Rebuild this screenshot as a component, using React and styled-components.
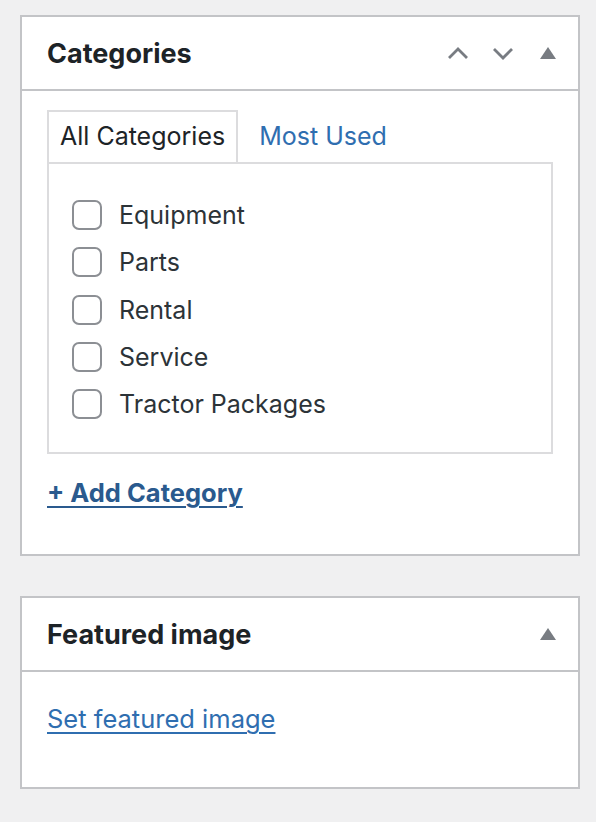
import styled, { createGlobalStyle } from "styled-components";

const GlobalStyle = createGlobalStyle`
  html, body {
    margin: 0;
    padding: 0;
    background: #f0f0f1;
  }
  body {
    font-family: Inter, "Noto Sans", "Liberation Sans", sans-serif;
    color: #2c3338;
  }
`

const Sidebar = styled.div`
  display: flex;
  flex-direction: column;
  gap: 40px;
  padding: 15px 16px 30px 20px;
  width: 560px;
`

const Box = styled.section`
  background: #fff;
  border: 2px solid #c3c4c7;
  box-sizing: border-box;
`

const BoxHeader = styled.header`
  display: flex;
  align-items: center;
  justify-content: space-between;
  height: 72px;
  padding: 0 18px 0 25px;
  border-bottom: 2px solid #c3c4c7;
`

const BoxTitle = styled.h2`
  margin: 0;
  font-size: 27px;
  font-weight: 700;
  color: #1d2327;
`

const Actions = styled.div`
  display: flex;
  align-items: center;
  gap: 21px;
`

const ActionIcon = styled.svg`
  width: 24px;
  height: 24px;
  display: block;
`

const BoxBody = styled.div`
  padding: ${p => p.$pad || "19px 25px 46px 25px"};
`

const Tabs = styled.ul`
  display: flex;
  list-style: none;
  margin: 0;
  padding: 0;
`

const Tab = styled.li`
  padding: 8px 11px 9px 11px;
  font-size: 25px;
  line-height: 33px;
  border: 2px solid ${p => (p.$active ? "#dcdcde" : "transparent")};
  border-bottom: none;
  color: ${p => (p.$active ? "#1d2327" : "#2f6eb0")};
  margin-left: ${p => (p.$active ? "0" : "8px")};
`

const TabPanel = styled.div`
  border: 2px solid #dcdcde;
  padding: 36px 23px 22px 23px;
  height: 292px;
  box-sizing: border-box;
`

const CheckList = styled.ul`
  list-style: none;
  margin: 0;
  padding: 0;
  display: flex;
  flex-direction: column;
  gap: 17.3px;
`

const CheckRow = styled.li`
  display: flex;
  align-items: center;
  gap: 17px;
  font-size: 25px;
  line-height: 30px;
  color: #2c3338;
`

const CheckBox = styled.span`
  width: 26px;
  height: 26px;
  border: 2px solid #8c8f94;
  border-radius: 7px;
  background: #fff;
  flex-shrink: 0;
`

const AddLink = styled.a`
  display: inline-block;
  margin-top: 23px;
  font-size: 25.5px;
  font-weight: 700;
  color: #2a5a8e;
  text-decoration: underline;
  text-decoration-thickness: 2px;
  text-underline-offset: 4px;
`

const PlainLink = styled.a`
  font-size: 25.5px;
  color: #2f6eb0;
  text-decoration: underline;
  text-decoration-thickness: 2px;
  text-underline-offset: 4px;
`

function Chevron({ up }) {
  return (
    <ActionIcon viewBox="0 0 24 24">
      <path
        d={up ? "M3 17 L12 8 L21 17" : "M3 8 L12 17 L21 8"}
        fill="none"
        stroke="#787c82"
        strokeWidth="2.8"
      />
    </ActionIcon>
  )
}

function Triangle() {
  return (
    <ActionIcon viewBox="0 0 24 24">
      <path d="M4 18 L12 6 L20 18 Z" fill="#787c82" />
    </ActionIcon>
  )
}

const categories = ["Equipment", "Parts", "Rental", "Service", "Tractor Packages"]

export default function App() {
  return (
    <>
      <GlobalStyle />
      <Sidebar>
        <Box>
          <BoxHeader>
            <BoxTitle>Categories</BoxTitle>
            <Actions>
              <Chevron up />
              <Chevron />
              <Triangle />
            </Actions>
          </BoxHeader>
          <BoxBody>
            <Tabs>
              <Tab $active>All Categories</Tab>
              <Tab>Most Used</Tab>
            </Tabs>
            <TabPanel>
              <CheckList>
                {categories.map(c => (
                  <CheckRow key={c}>
                    <CheckBox />
                    {c}
                  </CheckRow>
                ))}
              </CheckList>
            </TabPanel>
            <AddLink href="#">+ Add Category</AddLink>
          </BoxBody>
        </Box>
        <Box>
          <BoxHeader>
            <BoxTitle>Featured image</BoxTitle>
            <Actions>
              <Triangle />
            </Actions>
          </BoxHeader>
          <BoxBody $pad="31px 25px 53px 25px">
            <PlainLink href="#">Set featured image</PlainLink>
          </BoxBody>
        </Box>
      </Sidebar>
    </>
  )
}
